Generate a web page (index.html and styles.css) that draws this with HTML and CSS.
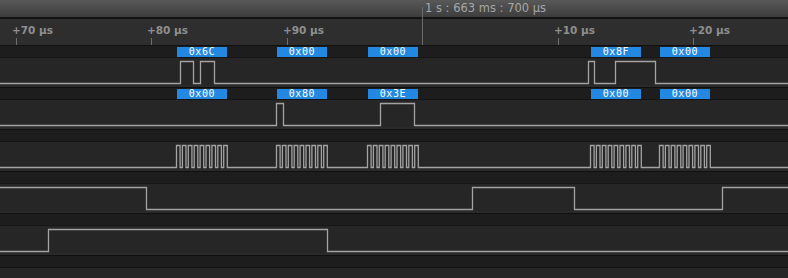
FILE: index.html
```html
<!DOCTYPE html>
<html>
<head>
<meta charset="utf-8">
<link rel="stylesheet" href="styles.css">
</head>
<body>
<div class="view">
  <div class="topbar">
    <span class="cursor-time" style="left:425px">1 s : 663 ms : 700 µs</span>
    <div class="cursor-line" style="left:422px"></div>
  </div>
  <div class="ruler">
    <span class="tick-label" style="left:12px">+70 µs</span><i class="tick" style="left:16px"></i>
    <span class="tick-label" style="left:147px">+80 µs</span><i class="tick" style="left:151px"></i>
    <span class="tick-label" style="left:283px">+90 µs</span><i class="tick" style="left:287px"></i>
    <span class="tick-label" style="left:554px">+10 µs</span><i class="tick" style="left:558px"></i>
    <span class="tick-label" style="left:689px">+20 µs</span><i class="tick" style="left:693px"></i>
  </div>

  <div class="channel">
    <div class="strip">
      <span class="bubble" style="left:177px">0x6C</span>
      <span class="bubble" style="left:277px">0x00</span>
      <span class="bubble" style="left:368px">0x00</span>
      <span class="bubble" style="left:591px">0x8F</span>
      <span class="bubble" style="left:660px">0x00</span>
    </div>
    <div class="sig">
      <svg class="trace" width="788" height="29" viewBox="0 0 788 29"><path d="M0 25.5H180.5V3.5H193.5V25.5H200.5V3.5H214.5V25.5H588.5V3.5H594.5V25.5H615.5V3.5H655.5V25.5H790"/></svg>
    </div>
  </div>

  <div class="channel">
    <div class="strip">
      <span class="bubble" style="left:177px">0x00</span>
      <span class="bubble" style="left:277px">0x80</span>
      <span class="bubble" style="left:368px">0x3E</span>
      <span class="bubble" style="left:591px">0x00</span>
      <span class="bubble" style="left:660px">0x00</span>
    </div>
    <div class="sig">
      <svg class="trace" width="788" height="29" viewBox="0 0 788 29"><path d="M0 25.5H276.5V3.5H283.5V25.5H380.5V3.5H414.5V25.5H790"/></svg>
    </div>
  </div>

  <div class="channel">
    <div class="strip"></div>
    <div class="sig">
      <svg class="trace" width="788" height="29" viewBox="0 0 788 29"><path d="M0 25.5H176.5v-22h3.6v22h2.3v-22h3.6v22h2.3v-22h3.6v22h2.3v-22h3.6v22h2.3v-22h3.6v22h2.3v-22h3.6v22h2.3v-22h3.6v22h2.3v-22h3.6v22h2.3v-22h3.6v22H276.5v-22h3.6v22h2.3v-22h3.6v22h2.3v-22h3.6v22h2.3v-22h3.6v22h2.3v-22h3.6v22h2.3v-22h3.6v22h2.3v-22h3.6v22h2.3v-22h3.6v22h2.3v-22h3.6v22H367.5v-22h3.6v22h2.3v-22h3.6v22h2.3v-22h3.6v22h2.3v-22h3.6v22h2.3v-22h3.6v22h2.3v-22h3.6v22h2.3v-22h3.6v22h2.3v-22h3.6v22h2.3v-22h3.6v22H590.5v-22h3.6v22h2.3v-22h3.6v22h2.3v-22h3.6v22h2.3v-22h3.6v22h2.3v-22h3.6v22h2.3v-22h3.6v22h2.3v-22h3.6v22h2.3v-22h3.6v22h2.3v-22h3.6v22H659.5v-22h3.6v22h2.3v-22h3.6v22h2.3v-22h3.6v22h2.3v-22h3.6v22h2.3v-22h3.6v22h2.3v-22h3.6v22h2.3v-22h3.6v22h2.3v-22h3.6v22h2.3v-22h3.6v22H790"/></svg>
    </div>
  </div>

  <div class="channel">
    <div class="strip"></div>
    <div class="sig">
      <svg class="trace" width="788" height="29" viewBox="0 0 788 29"><path d="M-2 3.5H146.5V25.5H472.5V3.5H574.5V25.5H722.5V3.5H790"/></svg>
    </div>
  </div>

  <div class="channel">
    <div class="strip"></div>
    <div class="sig">
      <svg class="trace" width="788" height="29" viewBox="0 0 788 29"><path d="M-2 25.5H48.5V3.5H327.5V25.5H790"/></svg>
    </div>
  </div>

  <div class="channel">
    <div class="strip"></div>
    <div class="sig"></div>
  </div>
</div>
</body>
</html>
```

FILE: styles.css
```css
html, body {
  margin: 0;
  padding: 0;
  background: #262626;
  overflow: hidden;
}

.view {
  width: 788px;
  height: 278px;
  overflow: hidden;
  display: flex;
  flex-direction: column;
}

.topbar {
  position: relative;
  flex: 0 0 17px;
  background: linear-gradient(#585858, #3d3d3d);
  border-bottom: 2px solid #121212;
}

.cursor-time {
  position: absolute;
  top: 1px;
  font-family: "DejaVu Sans", sans-serif;
  font-size: 11.5px;
  line-height: 14px;
  color: #a6a6a6;
  white-space: nowrap;
}

.cursor-line {
  position: absolute;
  top: 7px;
  width: 1px;
  height: 38px;
  background: #6a6a6a;
  z-index: 2;
}

.ruler {
  position: relative;
  flex: 0 0 26px;
  background: #2e2e2e;
}

.tick-label {
  position: absolute;
  top: 5px;
  font-family: "DejaVu Sans", sans-serif;
  font-weight: bold;
  font-size: 10.5px;
  line-height: 13px;
  color: #8e8e8e;
  white-space: nowrap;
}

.tick {
  position: absolute;
  top: 19px;
  width: 1px;
  height: 7px;
  background: #6e6e6e;
}

.channel {
  flex: 0 0 auto;
  display: flex;
  flex-direction: column;
}

.strip {
  position: relative;
  height: 11px;
  background: #1d1d1d;
  border-top: 1px solid #101010;
  border-bottom: 1px solid #151515;
}

.bubble {
  position: absolute;
  top: 1px;
  width: 50px;
  height: 10px;
  background: #2388e2;
  color: #ffffff;
  font-family: "DejaVu Sans Mono", monospace;
  font-size: 10px;
  line-height: 10px;
  letter-spacing: 0.6px;
  text-align: center;
}

.sig {
  height: 29px;
  background: #262626;
  box-shadow: inset 0 -2px 0 #2a2a2a;
}

.trace {
  display: block;
}

.trace path {
  fill: none;
  stroke: #a3a3a3;
  stroke-width: 1.3;
}
```
